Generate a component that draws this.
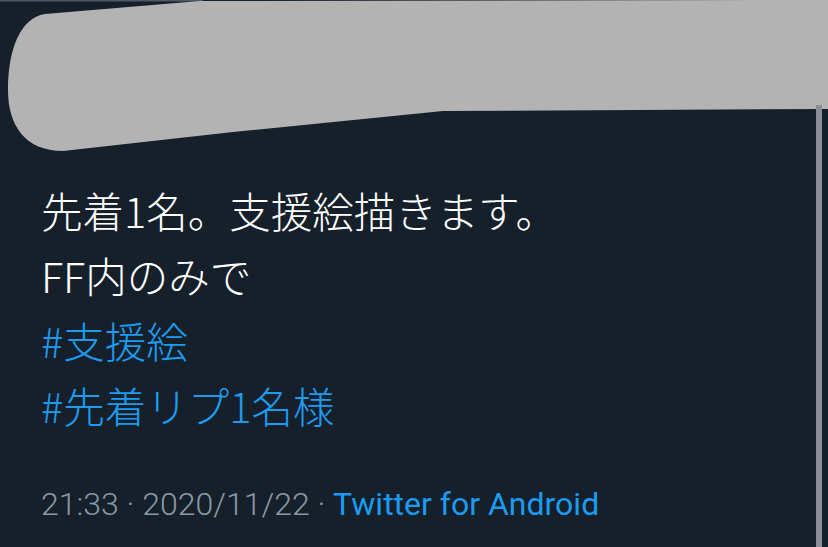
import React from 'react';

const jp = '"Noto Sans CJK JP", "Noto Sans", sans-serif';

export default function App() {
  return (
    <div className="relative w-[828px] h-[547px] overflow-hidden bg-[#15202b]">
      {/* scrubbed-out header */}
      <svg width="828" height="160" viewBox="0 0 828 160" className="block">
        <rect x="0" y="0" width="203" height="1.5" fill="#4d5863" />
        <path
          d="M 200 1 L 828 0 L 828 109 L 443 111 L 233 132 L 63 151 C 25 151 8 125 8 90 C 8 50 20 18 45 14 L 200 1 Z"
          fill="#b3b3b3"
        />
      </svg>

      <div className="mt-[18px] pl-[41px] text-[41.5px] leading-[65px] font-light" style={{ fontFamily: jp }}>
        <div className="text-white">先着1名。支援絵描きます。</div>
        <div className="text-white">FF内のみで</div>
        <div className="text-[#1d9bf0]">#支援絵</div>
        <div className="text-[#1d9bf0]">#先着リプ1名様</div>
      </div>

      <div
        className="mt-[46px] pl-[41px] text-[32px] leading-[40px] font-light text-[#8b98a5]"
        style={{ fontFamily: 'Roboto, "Liberation Sans", sans-serif' }}
      >
        21:33 · 2020/11/22 · <span className="text-[#1d9bf0] font-normal">Twitter for Android</span>
      </div>

      {/* scroll indicator */}
      <div className="absolute right-[6px] top-[105px] bottom-0 w-[6px] bg-[#8a8d96]" />
    </div>
  );
}
